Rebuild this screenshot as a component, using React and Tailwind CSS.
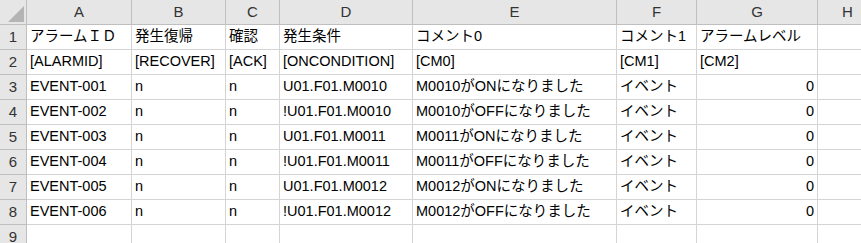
import React from "react";

const cols = ["A", "B", "C", "D", "E", "F", "G", "H"];

const rows = [
  ["アラームＩＤ", "発生復帰", "確認", "発生条件", "コメント0", "コメント1", "アラームレベル", ""],
  ["[ALARMID]", "[RECOVER]", "[ACK]", "[ONCONDITION]", "[CM0]", "[CM1]", "[CM2]", ""],
  ["EVENT-001", "n", "n", "U01.F01.M0010", "M0010がONになりました", "イベント", "0", ""],
  ["EVENT-002", "n", "n", "!U01.F01.M0010", "M0010がOFFになりました", "イベント", "0", ""],
  ["EVENT-003", "n", "n", "U01.F01.M0011", "M0011がONになりました", "イベント", "0", ""],
  ["EVENT-004", "n", "n", "!U01.F01.M0011", "M0011がOFFになりました", "イベント", "0", ""],
  ["EVENT-005", "n", "n", "U01.F01.M0012", "M0012がONになりました", "イベント", "0", ""],
  ["EVENT-006", "n", "n", "!U01.F01.M0012", "M0012がOFFになりました", "イベント", "0", ""],
  ["", "", "", "", "", "", "", ""],
];

export default function App() {
  return (
    <div
      className="w-[861px] h-[243px] overflow-hidden bg-white text-black"
      style={{ fontFamily: '"Liberation Sans", "Noto Sans CJK JP", sans-serif' }}
    >
      <div className="grid grid-cols-[27px_105px_94px_54px_133px_204px_80px_121px_60px] auto-rows-[25px]">
        <div className="bg-[#e6e6e6] border-r border-b border-[#bfbfbf] relative">
          <svg className="absolute left-[8px] top-[6px]" width="16" height="16" viewBox="0 0 16 16">
            <polygon points="16,0 16,16 0,16" fill="#b4b4b4" />
          </svg>
        </div>
        {cols.map((c) => (
          <div
            key={c}
            className="bg-[#e6e6e6] border-r border-b border-[#bfbfbf] flex items-center justify-center text-[15px] text-[#333]"
          >
            {c}
          </div>
        ))}
        {rows.map((r, i) => (
          <React.Fragment key={i}>
            <div className="bg-[#e6e6e6] border-r border-b border-[#bfbfbf] flex items-center justify-center text-[15px] text-[#333]">
              {i + 1}
            </div>
            {r.map((v, j) => (
              <div
                key={j}
                className={
                  "border-r border-b border-[#d4d4d4] flex items-center px-[3px] text-[14.5px] whitespace-nowrap overflow-visible " +
                  (j === 6 && i >= 2 ? "justify-end" : "")
                }
              >
                {v}
              </div>
            ))}
          </React.Fragment>
        ))}
      </div>
    </div>
  );
}
